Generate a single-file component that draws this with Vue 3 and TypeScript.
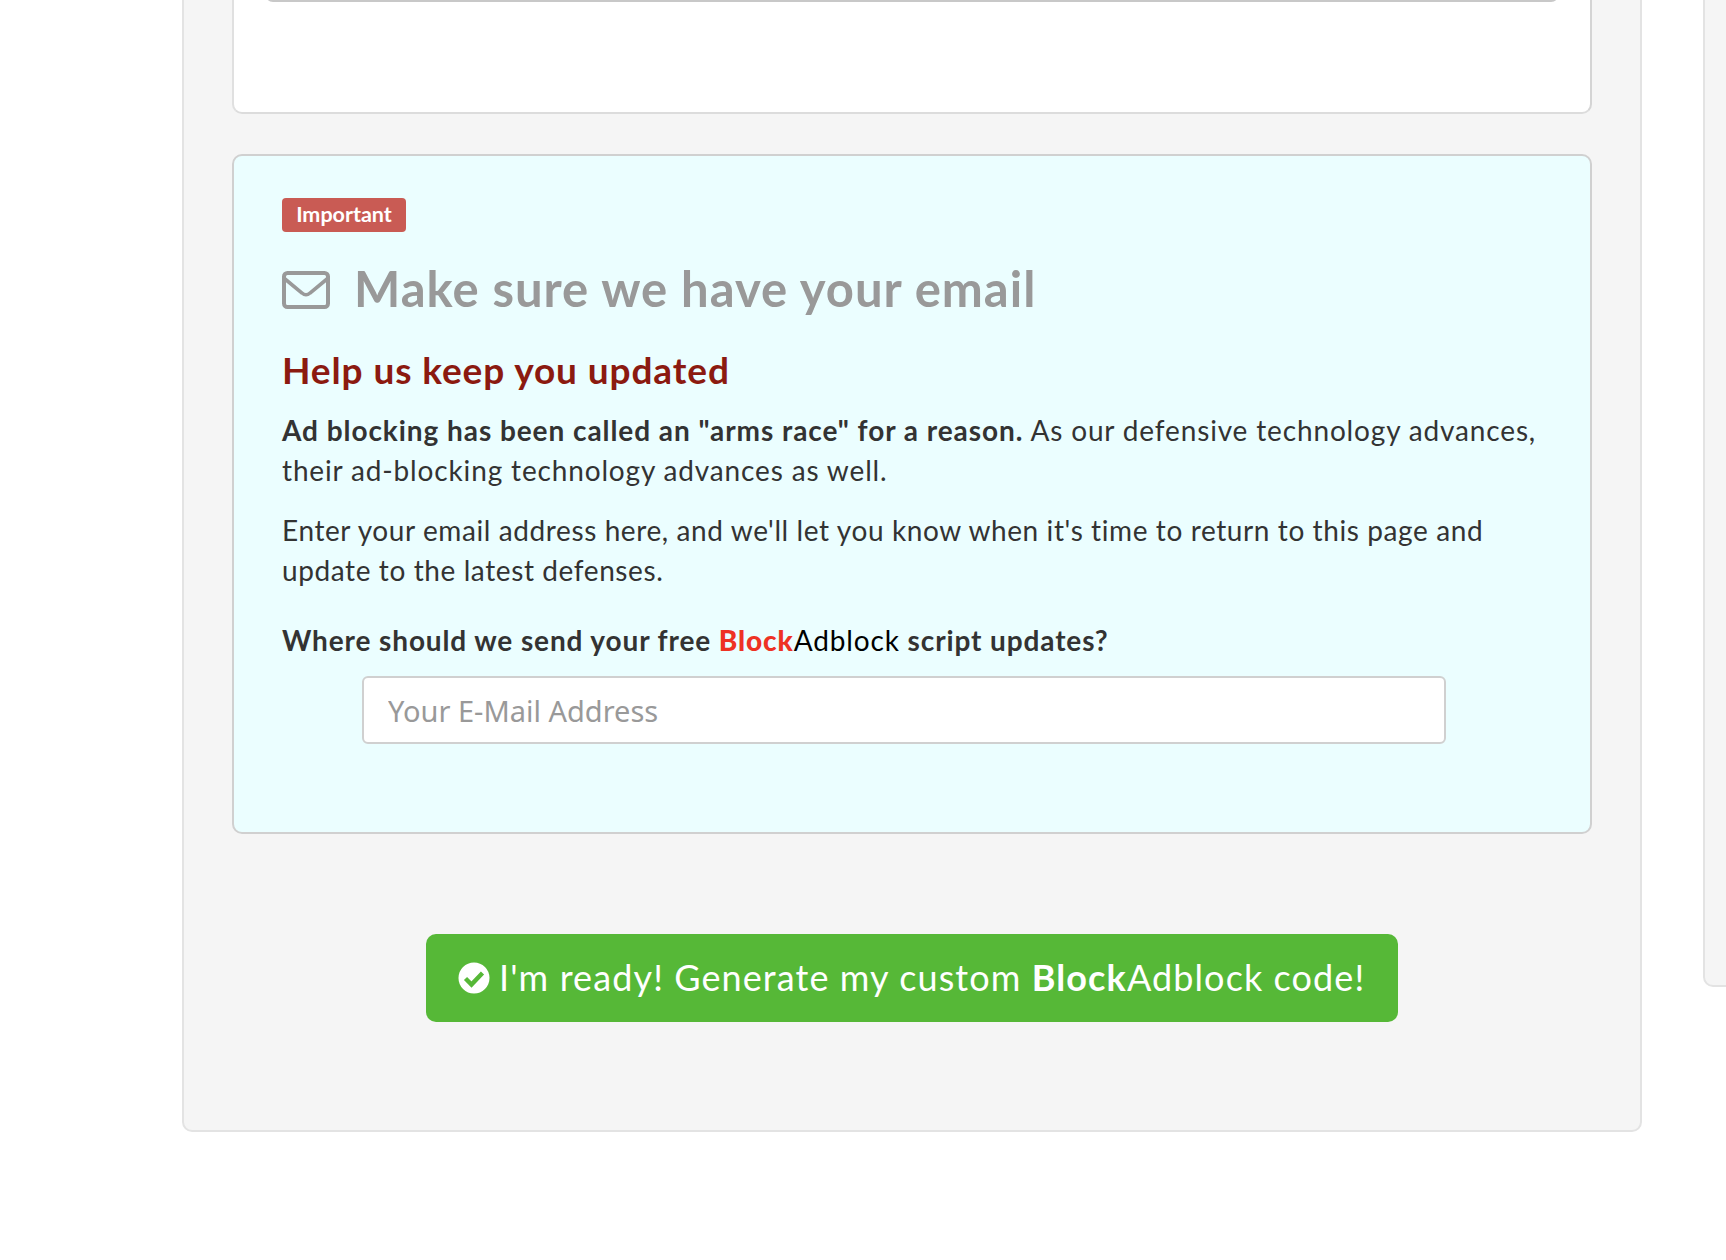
<script setup lang="ts">
const title = 'Make sure we have your email'
</script>

<template>
  <div class="page">
    <main class="panel">
      <section class="card top-card">
        <div class="prev-input"></div>
      </section>
      <section class="card notice">
        <span class="badge">Important</span>
        <h2 class="title">
          <svg class="mail" viewBox="0 0 48 38" width="48" height="38" aria-hidden="true">
            <rect x="2" y="2" width="44" height="34" rx="3.5" fill="none" stroke="#999" stroke-width="4" />
            <path d="M3 8 L20 22 Q24 25.5 28 22 L45 8" fill="none" stroke="#999" stroke-width="3.6" />
          </svg>
          <span>{{ title }}</span>
        </h2>
        <h3 class="subtitle">Help us keep you updated</h3>
        <p class="copy first"><strong>Ad blocking has been called an "arms race" for a reason.</strong> As our defensive technology advances, their ad-blocking technology advances as well.</p>
        <p class="copy">Enter your email address here, and we'll let you know when it's time to return to this page and update to the latest defenses.</p>
        <label class="label" for="email">Where should we send your free <b class="red">Block</b><span class="black">Adblock</span> script updates?</label>
        <input id="email" class="email" type="text" placeholder="Your E-Mail Address" />
      </section>
      <div class="action">
        <button class="ready" type="button">
          <svg class="check" viewBox="0 0 32 32" width="32" height="32" aria-hidden="true">
            <circle cx="16" cy="16" r="15.5" fill="#fff" />
            <path d="M7.5 16.5 L13.5 22.5 L24.5 11" fill="none" stroke="#56b837" stroke-width="4.4" />
          </svg>
          <span class="ready-text">I'm ready! Generate my custom <b>Block</b>Adblock code!</span>
        </button>
      </div>
    </main>
    <aside class="side"></aside>
  </div>
</template>

<style>
html, body { margin: 0; background: #fff; }
</style>

<style scoped>
.page {
  display: flex;
  align-items: flex-start;
  height: 1260px;
  overflow: hidden;
  padding-left: 182px;
  box-sizing: border-box;
  font-family: Lato, "Open Sans", sans-serif;
  color: #333;
}
.panel {
  flex: 0 0 1460px;
  box-sizing: border-box;
  height: 1432px;
  margin-top: -300px;
  padding: 0 48px;
  background: #f5f5f5;
  border: 2px solid #e3e3e3;
  border-radius: 10px;
}
.side {
  flex: 0 0 300px;
  height: 1287px;
  margin: -300px 0 0 61px;
  box-sizing: border-box;
  background: #f5f5f5;
  border: 2px solid #e3e3e3;
  border-radius: 10px;
}
.card {
  box-sizing: border-box;
  border: 2px solid #d0d0d0;
  border-radius: 10px;
}
.top-card {
  height: 412px;
  background: #fff;
  border-top: 0;
  border-left-color: #e0e0e0;
  border-right-color: #d4d4d4;
  border-bottom-color: #dcdcdc;
  padding: 0 31px;
}
.prev-input {
  height: 298px;
  border-bottom: 2px solid #c8c8c8;
  border-radius: 0 0 8px 8px;
}
.notice {
  height: 680px;
  margin-top: 40px;
  padding: 42px 48px 0;
  background: #ebfeff;
}
.badge {
  display: block;
  box-sizing: border-box;
  width: 124px;
  height: 34px;
  background: #c95b54;
  border-radius: 4px;
  color: #fff;
  font-size: 21.5px;
  font-weight: 700;
  line-height: 33px;
  text-align: center;
}
.title {
  display: flex;
  align-items: center;
  gap: 24px;
  margin: 27px 0 0;
  height: 58px;
  color: #999;
  font-size: 49px;
  font-weight: 700;
  letter-spacing: 0.98px;
  line-height: 58px;
}
.mail { flex: none; margin-top: 4px; }
.subtitle {
  margin: 31px 0 0;
  color: #8b1a10;
  font-size: 37px;
  font-weight: 700;
  line-height: 44px;
  letter-spacing: 0.9px;
}
.copy {
  margin: 18px 0 0;
  font-size: 28px;
  line-height: 40px;
  letter-spacing: 0.6px;
  color: #333;
}
.copy.first { letter-spacing: 0.85px; }
.copy + .copy { margin-top: 20px; }
.copy strong { font-weight: 700; letter-spacing: 0.94px; }
.label {
  display: block;
  margin-top: 30px;
  font-size: 28px;
  font-weight: 700;
  line-height: 40px;
  letter-spacing: 0.88px;
  color: #333;
}
.red { color: #ee3224; }
.black { color: #000; font-weight: 400; }
.email {
  display: block;
  box-sizing: border-box;
  width: 1084px;
  height: 68px;
  margin: 16px 0 0 80px;
  padding: 0 24px;
  background: #fff;
  border: 2px solid #d0d0d0;
  border-radius: 6px;
  font-family: "Noto Sans", sans-serif;
  font-size: 29px;
  outline: none;
}
.email::placeholder { color: #999; opacity: 1; }
.action {
  display: flex;
  justify-content: center;
  margin-top: 100px;
}
.ready {
  display: flex;
  align-items: center;
  gap: 9px;
  box-sizing: border-box;
  width: 972px;
  height: 88px;
  padding: 0 32px;
  background: #56b837;
  border: 0;
  border-radius: 10px;
  color: #fff;
  font-family: Lato, "Open Sans", sans-serif;
  font-size: 36px;
  white-space: nowrap;
  letter-spacing: 1.1px;
}
.ready-text { margin-top: -2px; }
.ready b { font-weight: 700; }
.check { flex: none; }
</style>
